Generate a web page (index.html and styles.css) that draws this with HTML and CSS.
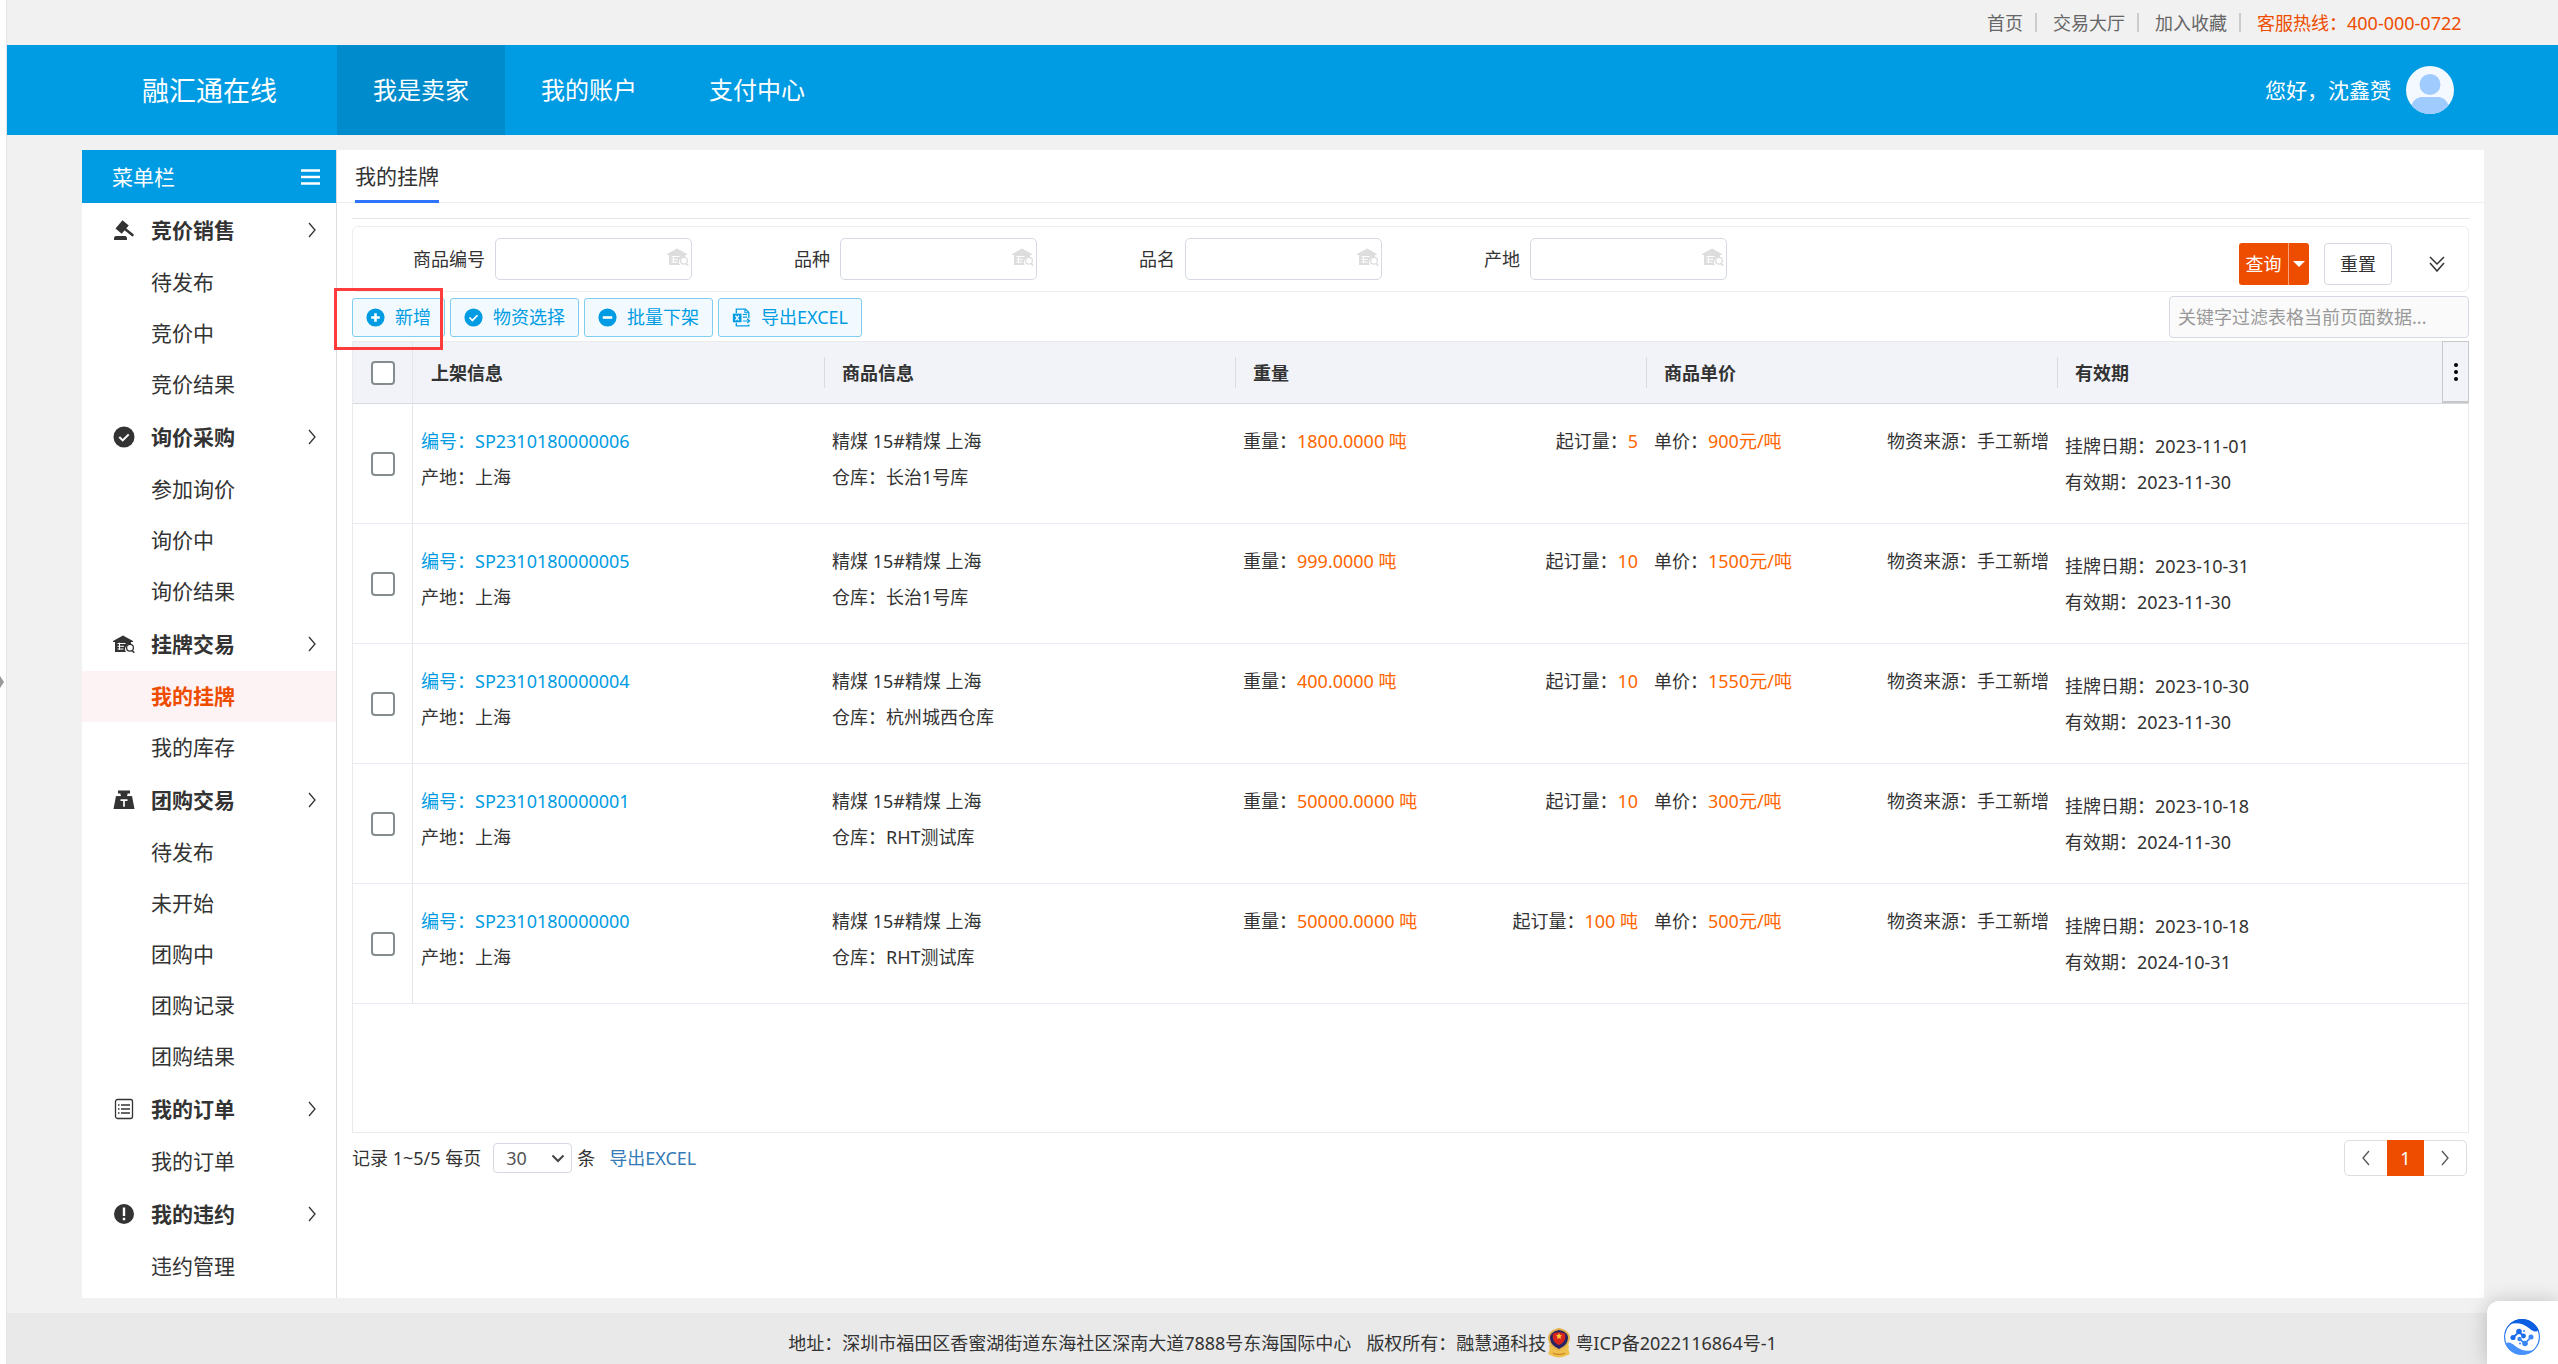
FILE: index.html
```html
<!DOCTYPE html>
<html lang="zh-CN">
<head>
  <meta charset="utf-8">
  <title>我的挂牌 - 融汇通在线</title>
  <link rel="stylesheet" href="styles.css">
</head>
<body>

<svg class="defs" aria-hidden="true">
  <symbol id="i-right" viewBox="0 0 8 16"><path d="M1 1l6 7-6 7" fill="none" stroke="currentColor" stroke-width="1.3"/></symbol>
  <symbol id="i-left" viewBox="0 0 8 16"><path d="M7 1L1 8l6 7" fill="none" stroke="currentColor" stroke-width="1.3"/></symbol>
  <symbol id="i-bars" viewBox="0 0 19 16"><path d="M0 1.5h19M0 8h19M0 14.5h19" stroke="currentColor" stroke-width="2.4"/></symbol>
  <symbol id="i-gavel" viewBox="0 0 22 22">
    <path d="M1 19.5c0-1.500.8-2.500 2-2.500h9c1.200 0 2 1 2 2.500v1.500H1z" fill="currentColor"/>
    <path d="M2.500 9.500L9.500 1.300l6.200 5.200-7 8.200z" fill="currentColor"/>
    <path d="M12 10l7.500 6" stroke="currentColor" stroke-width="2.600" stroke-linecap="round"/>
  </symbol>
  <symbol id="i-check" viewBox="0 0 22 22"><circle cx="11" cy="11" r="10.500" fill="currentColor"/><path d="M6.300 11l3.400 3.400 6-6" fill="none" stroke="#fff" stroke-width="2"/></symbol>
  <symbol id="i-plus" viewBox="0 0 22 22"><circle cx="11" cy="11" r="10.500" fill="currentColor"/><path d="M11 6v10M6 11h10" stroke="#fff" stroke-width="3"/></symbol>
  <symbol id="i-minus" viewBox="0 0 22 22"><circle cx="11" cy="11" r="10.500" fill="currentColor"/><path d="M5.500 11h11" stroke="#fff" stroke-width="3"/></symbol>
  <symbol id="i-warn" viewBox="0 0 22 22"><circle cx="11" cy="11" r="10" fill="currentColor"/><path d="M11 4.500v8.500M11 14.800v2.400" stroke="#fff" stroke-width="2.400"/></symbol>
  <symbol id="i-house" viewBox="0 0 22 22">
    <path d="M0 8l10-5.500L20 8v1h-2v2.200a5 5 0 0 0-5 7.800H2V9H0z" fill="currentColor"/>
    <path d="M4.500 10.500h8M4.500 13.300h6.500M4.500 16h6M6.500 9.800v7" stroke="#fff" stroke-width="1"/>
    <circle cx="17" cy="14.800" r="3.400" fill="none" stroke="currentColor" stroke-width="1.300"/>
    <path d="M19 17.500l2.300 2.300" stroke="currentColor" stroke-width="1.600"/>
  </symbol>
  <symbol id="i-weight" viewBox="0 0 22 22">
    <path d="M5 1.500h12v3h-2.500V7H19l2.500 13H.5L3 7h4.500V4.500H5z" fill="currentColor"/>
    <path d="M3 6.600h5M14 6.600h5" stroke="#fff" stroke-width=".8"/>
    <path d="M7.500 11.200h7M11 11.200v6.600" stroke="#fff" stroke-width="1.700"/>
  </symbol>
  <symbol id="i-order" viewBox="0 0 22 22">
    <rect x="2.500" y="1.500" width="17" height="19" rx="2" fill="none" stroke="currentColor" stroke-width="1.300"/>
    <path d="M5 7h1.500M8 7h9M5 11h1.500M8 11h9M5 15h1.500M8 15h9" stroke="currentColor" stroke-width="1.300"/>
  </symbol>
  <symbol id="i-excel" viewBox="0 0 22 22">
    <path d="M5 6V1.200h10.500l4 4V12M5 17v3.800h14.500V19" fill="none" stroke="currentColor" stroke-width="1.500"/>
    <path d="M15 1.500v4h4M12.500 7.500h5M12.500 10.500h5M12.500 15h7.500M17.500 12.500l3 2.500-3 2.500" fill="none" stroke="currentColor" stroke-width="1.300"/>
    <rect x="1" y="6.500" width="10" height="10" fill="currentColor"/>
    <path d="M4 8.800l4 5.400M8 8.800l-4 5.400" stroke="#fff" stroke-width="1.500"/>
  </symbol>
</svg>

<div class="drawer"><span></span></div>

<div class="page">
  <div class="topbar">
    <a href="#">首页</a><i></i>
    <a href="#">交易大厅</a><i></i>
    <a href="#">加入收藏</a><i></i>
    <span class="hotline">客服热线：400-000-0722</span>
  </div>

  <header class="header">
    <div class="logo">融汇通在线</div>
    <nav class="nav">
      <a class="active" href="#">我是卖家</a>
      <a href="#">我的账户</a>
      <a href="#">支付中心</a>
    </nav>
    <div class="user">
      <span>您好，沈鑫赟</span>
      <svg class="avatar" viewBox="0 0 48 48">
        <clipPath id="face"><circle cx="24" cy="24" r="24"/></clipPath>
        <g clip-path="url(#face)">
          <rect width="48" height="48" fill="#f4f9ff"/>
          <circle cx="24" cy="18.500" r="10.500" fill="#9fcbff"/>
          <path d="M5 44c0-8 5-13 11-13h16c6 0 11 5 11 13v4H5z" fill="#9fcbff"/>
        </g>
      </svg>
    </div>
  </header>

  <div class="main">
    <aside class="sidebar">
      <div class="sidebar-title">菜单栏<svg width="19" height="16"><use href="#i-bars"/></svg></div>

      <div class="group"><svg class="icon"><use href="#i-gavel"/></svg>竞价销售<svg class="arrow"><use href="#i-right"/></svg></div>
      <a href="#">待发布</a>
      <a href="#">竞价中</a>
      <a href="#">竞价结果</a>

      <div class="group"><svg class="icon"><use href="#i-check"/></svg>询价采购<svg class="arrow"><use href="#i-right"/></svg></div>
      <a href="#">参加询价</a>
      <a href="#">询价中</a>
      <a href="#">询价结果</a>

      <div class="group"><svg class="icon"><use href="#i-house"/></svg>挂牌交易<svg class="arrow"><use href="#i-right"/></svg></div>
      <a class="active" href="#">我的挂牌</a>
      <a href="#">我的库存</a>

      <div class="group"><svg class="icon"><use href="#i-weight"/></svg>团购交易<svg class="arrow"><use href="#i-right"/></svg></div>
      <a href="#">待发布</a>
      <a href="#">未开始</a>
      <a href="#">团购中</a>
      <a href="#">团购记录</a>
      <a href="#">团购结果</a>

      <div class="group"><svg class="icon"><use href="#i-order"/></svg>我的订单<svg class="arrow"><use href="#i-right"/></svg></div>
      <a href="#">我的订单</a>

      <div class="group"><svg class="icon"><use href="#i-warn"/></svg>我的违约<svg class="arrow"><use href="#i-right"/></svg></div>
      <a href="#">违约管理</a>
    </aside>

    <div class="content">
      <div class="tabs"><a href="#">我的挂牌</a></div>

      <div class="panel">
        <form class="filter">
          <div class="field">
            <label for="code">商品编号</label>
            <div class="lookup"><input id="code" type="text"><svg><use href="#i-house"/></svg></div>
          </div>
          <div class="field">
            <label for="kind">品种</label>
            <div class="lookup"><input id="kind" type="text"><svg><use href="#i-house"/></svg></div>
          </div>
          <div class="field">
            <label for="name">品名</label>
            <div class="lookup"><input id="name" type="text"><svg><use href="#i-house"/></svg></div>
          </div>
          <div class="field">
            <label for="place">产地</label>
            <div class="lookup"><input id="place" type="text"><svg><use href="#i-house"/></svg></div>
          </div>
          <div class="filter-actions">
            <div class="split">
              <button type="button">查询</button>
              <button type="button" class="caret" aria-label="更多查询"></button>
            </div>
            <button type="button" class="reset">重置</button>
            <svg class="expand" viewBox="0 0 16 16"><path d="M1 1l7 7 7-7M1 7l7 8 7-8" fill="none" stroke="#333" stroke-width="1.500"/></svg>
          </div>
        </form>

        <div class="toolbar">
          <span class="marked"><button type="button"><svg><use href="#i-plus"/></svg>新增</button></span>
          <button type="button"><svg><use href="#i-check"/></svg>物资选择</button>
          <button type="button"><svg><use href="#i-minus"/></svg>批量下架</button>
          <button type="button"><svg><use href="#i-excel"/></svg>导出EXCEL</button>
          <input class="search" type="text" aria-label="过滤" placeholder="关键字过滤表格当前页面数据...">
        </div>

        <div class="grid">
          <button type="button" class="grid-menu" aria-label="列设置"><svg viewBox="0 0 4 18"><circle cx="2" cy="2" r="2"/><circle cx="2" cy="9" r="2"/><circle cx="2" cy="16" r="2"/></svg></button>
          <table>
            <thead>
              <tr>
                <th class="pick"><input type="checkbox" aria-label="全选"></th>
                <th>上架信息</th>
                <th>商品信息</th>
                <th>重量</th>
                <th>商品单价</th>
                <th>有效期</th>
              </tr>
            </thead>
            <tbody>
              <tr>
                <td class="pick"><input type="checkbox" aria-label="选择"></td>
                <td><a href="#">编号：SP2310180000006</a><br>产地：上海</td>
                <td>精煤 15#精煤 上海<br>仓库：长治1号库</td>
                <td><div class="pair"><span>重量：<em>1800.0000 吨</em></span><span>起订量：<em>5</em></span></div></td>
                <td><div class="pair"><span>单价：<em>900元/吨</em></span><span>物资来源：手工新增</span></div></td>
                <td class="date">挂牌日期：2023-11-01<br>有效期：2023-11-30</td>
              </tr>
              <tr>
                <td class="pick"><input type="checkbox" aria-label="选择"></td>
                <td><a href="#">编号：SP2310180000005</a><br>产地：上海</td>
                <td>精煤 15#精煤 上海<br>仓库：长治1号库</td>
                <td><div class="pair"><span>重量：<em>999.0000 吨</em></span><span>起订量：<em>10</em></span></div></td>
                <td><div class="pair"><span>单价：<em>1500元/吨</em></span><span>物资来源：手工新增</span></div></td>
                <td class="date">挂牌日期：2023-10-31<br>有效期：2023-11-30</td>
              </tr>
              <tr>
                <td class="pick"><input type="checkbox" aria-label="选择"></td>
                <td><a href="#">编号：SP2310180000004</a><br>产地：上海</td>
                <td>精煤 15#精煤 上海<br>仓库：杭州城西仓库</td>
                <td><div class="pair"><span>重量：<em>400.0000 吨</em></span><span>起订量：<em>10</em></span></div></td>
                <td><div class="pair"><span>单价：<em>1550元/吨</em></span><span>物资来源：手工新增</span></div></td>
                <td class="date">挂牌日期：2023-10-30<br>有效期：2023-11-30</td>
              </tr>
              <tr>
                <td class="pick"><input type="checkbox" aria-label="选择"></td>
                <td><a href="#">编号：SP2310180000001</a><br>产地：上海</td>
                <td>精煤 15#精煤 上海<br>仓库：RHT测试库</td>
                <td><div class="pair"><span>重量：<em>50000.0000 吨</em></span><span>起订量：<em>10</em></span></div></td>
                <td><div class="pair"><span>单价：<em>300元/吨</em></span><span>物资来源：手工新增</span></div></td>
                <td class="date">挂牌日期：2023-10-18<br>有效期：2024-11-30</td>
              </tr>
              <tr>
                <td class="pick"><input type="checkbox" aria-label="选择"></td>
                <td><a href="#">编号：SP2310180000000</a><br>产地：上海</td>
                <td>精煤 15#精煤 上海<br>仓库：RHT测试库</td>
                <td><div class="pair"><span>重量：<em>50000.0000 吨</em></span><span>起订量：<em>100 吨</em></span></div></td>
                <td><div class="pair"><span>单价：<em>500元/吨</em></span><span>物资来源：手工新增</span></div></td>
                <td class="date">挂牌日期：2023-10-18<br>有效期：2024-10-31</td>
              </tr>
            </tbody>
          </table>
        </div>

        <div class="pager">
          <label for="size">记录 1~5/5 每页</label>
          <span class="select">
            <select id="size"><option>10</option><option selected>30</option><option>50</option></select>
            <svg viewBox="0 0 14 9"><path d="M1.500 1.500L7 7l5.500-5.500" fill="none" stroke="#444" stroke-width="2"/></svg>
          </span>
          <span>条</span>
          <a class="export" href="#">导出EXCEL</a>
          <div class="pages">
            <button type="button" aria-label="上一页"><svg><use href="#i-left"/></svg></button>
            <button type="button" class="active">1</button>
            <button type="button" aria-label="下一页"><svg><use href="#i-right"/></svg></button>
          </div>
        </div>
      </div>
    </div>
  </div>

  <footer class="footer">
    <span class="address">地址：深圳市福田区香蜜湖街道东海社区深南大道7888号东海国际中心</span>
    <span>版权所有：融慧通科技</span>
    <svg class="badge" viewBox="0 0 26 30">
      <path d="M3 17c1 6 0 7-1 9 3 1 5 3 11 3.500C19 29 21 27 24 26c-1-2-2-3-1-9z" fill="#f0c04f"/>
      <path d="M13 0c6 1 10 4 11 9 0 7-4 11-11 14C6 20 2 16 2 9 3 4 7 1 13 0z" fill="#e2b24a"/>
      <path d="M13 2c5 1 8 3 9 7 0 6-3 9-9 12C7 18 4 15 4 9c1-4 4-6 9-7z" fill="#2a2465"/>
      <path d="M7 6c2-2 10-2 12 0 1 5-1 9-6 11C8 15 6 11 7 6z" fill="#d9261c"/>
      <path d="M13 5l1 2 2 .3-1.500 1.500.4 2.200-1.900-1-1.900 1 .4-2.200L10 7.300l2-.3z" fill="#f7c93d"/>
      <path d="M7 25c3 2 9 2 12 0" fill="none" stroke="#c98b28" stroke-width="1.500"/>
    </svg>
    <a href="#">粤ICP备2022116864号-1</a>
  </footer>
</div>

<div class="service">
  <svg viewBox="0 0 36 36">
    <defs><linearGradient id="blue" x1="0" y1="0" x2="0" y2="1"><stop offset="0" stop-color="#0758dd"/><stop offset="1" stop-color="#4e9bff"/></linearGradient></defs>
    <circle cx="18" cy="18" r="17.400" fill="none" stroke="url(#blue)" stroke-width="1.200"/>
    <path d="M5 5.500C14-3 29-1 34.500 11c-3 3-6 1-9-1.500C19 4 12 3 5 5.500z" fill="#0d5fe2"/>
    <path d="M31 30.500C22 39 7 37 1.500 25c3-3 6-1 9 1.500C17 32 24 33 31 30.500z" fill="#4691fb"/>
    <g fill="#1d6cea">
      <circle cx="9" cy="18.500" r="2.600"/><circle cx="15" cy="12.500" r="2.800"/><circle cx="19.500" cy="17" r="2.400"/>
    </g>
    <g fill="#3a86f6">
      <circle cx="15.500" cy="20" r="2.200"/><circle cx="21" cy="24.500" r="2.800"/><circle cx="27" cy="18" r="2.500"/>
      <circle cx="20" cy="12" r="1"/><circle cx="16" cy="24.500" r="1"/>
    </g>
    <path d="M9 18.500l6-5.500 4.500 4" fill="none" stroke="#1d6cea" stroke-width="1.800"/>
    <path d="M15.500 20l5.500 4.500 6-6.500" fill="none" stroke="#3a86f6" stroke-width="1.800"/>
  </svg>
</div>

</body>
</html>
```

FILE: styles.css
```css
* { box-sizing: border-box; }

body {
  margin: 0;
  display: flex;
  min-height: 100vh;
  background: #f1f1f1;
  color: #333;
  font: 18px/24px "Noto Sans", "Noto Sans CJK SC", sans-serif;
}

a { color: inherit; text-decoration: none; }
em { font-style: normal; color: #f60; }
button, input, select { font: inherit; color: inherit; }
button { cursor: pointer; }
.defs { position: absolute; width: 0; height: 0; }

/* collapsed drawer on the left */
.drawer { width: 7px; flex: none; background: #fff; border-right: 1px solid #e4e4e4; display: flex; align-items: center; }
.drawer span { border: 6px solid transparent; border-left: 4px solid #999; border-right: 0; }

.page { flex: 1; min-width: 0; display: flex; flex-direction: column; }

.topbar { display: flex; align-items: center; justify-content: flex-end; height: 45px; padding-right: 89px; color: #666; }
.topbar i { width: 2px; height: 19px; margin: 0 16px 0 12px; background: #ccc; }
.topbar .hotline { min-width: 212px; color: #ee4d00; }

.header { display: flex; height: 90px; background: #009ce3; color: #fff; }
.logo { width: 330px; padding-left: 135px; font-size: 27px; line-height: 92px; }
.nav { display: flex; }
.nav a { width: 168px; text-align: center; font-size: 24px; line-height: 90px; }
.nav a.active { background: #008ccc; }
.user { display: flex; align-items: center; gap: 15px; margin-left: auto; padding-right: 104px; font-size: 21px; }
.avatar { width: 48px; height: 48px; }

.main { display: flex; flex: 1; margin: 15px 74px 15px 75px; background: #fff; }

.sidebar { width: 255px; flex: none; padding-bottom: 6px; border-right: 1px solid #ddd; font-size: 21px; }
.sidebar-title { display: flex; align-items: center; justify-content: space-between; height: 53px; padding: 0 16px 0 30px; background: #009ce3; color: #fff; }
.group { display: flex; align-items: center; height: 54px; padding: 0 20px 0 31px; font-weight: bold; }
.group .icon { width: 22px; height: 22px; margin-right: 16px; }
.group .arrow { width: 8px; height: 16px; margin-left: auto; }
.sidebar a { display: block; padding-left: 69px; line-height: 51px; }
.sidebar a.active { background: #fdf2f4; color: #ee4d00; font-weight: bold; }

.content { flex: 1; min-width: 0; }
.tabs { height: 53px; padding-left: 18px; border-bottom: 1px solid #eee; font-size: 21px; }
.tabs a { display: inline-block; height: 53px; line-height: 52px; border-bottom: 3px solid #2f74ff; }
.panel { margin: 15px 15px 0; border-top: 1px solid #e4e4e4; }

.filter { display: flex; gap: 6px; height: 66px; margin-top: 7px; padding-top: 11px; border: 1px solid #eee; border-radius: 6px; }
.field { display: flex; align-items: center; gap: 10px; height: 42px; }
.field label { width: 132px; text-align: right; }
.lookup { position: relative; }
.lookup input { display: block; width: 197px; height: 42px; padding: 0 30px 0 10px; border: 1px solid #d5d9e2; border-radius: 5px; background: #fff; }
.lookup svg { position: absolute; right: 3px; top: 8px; width: 22px; height: 22px; color: #ddd; }
.filter-actions { display: flex; align-items: center; height: 42px; margin: 5px 23px 0 auto; }
.split { display: flex; }
.split button { height: 42px; width: 50px; padding: 0; border: 0; border-right: 1px solid #f6a27b; border-radius: 3px 0 0 3px; background: #ee4d00; color: #fff; }
.split .caret { display: flex; align-items: center; justify-content: center; width: 20px; border: 0; border-radius: 0 3px 3px 0; }
.caret::before { content: ""; border: 6px solid transparent; border-top-color: #fff; border-bottom: 0; }
.reset { width: 68px; height: 42px; margin: 0 37px 0 15px; padding: 0; border: 1px solid #d5d9e2; border-radius: 4px; background: #fff; }
.expand { width: 16px; height: 16px; }

.toolbar { display: flex; align-items: center; gap: 5px; height: 42px; margin: 4px 0 3px; }
.toolbar button { display: flex; align-items: center; height: 39px; padding: 0 13px; border: 1px solid #7fcdef; border-radius: 3px; background: #f2faff; color: #009ce3; }
.toolbar svg { width: 19px; height: 19px; margin-right: 10px; }
/* highlight of the step being described */
.marked { position: relative; }
.marked::after { content: ""; position: absolute; left: -18px; right: 2px; top: -10px; bottom: -13px; border: 3px solid #ff3b3b; pointer-events: none; z-index: 1; }
.search { width: 300px; height: 42px; margin-left: auto; padding: 0 8px; border: 1px solid #d5d9e2; border-radius: 4px; background: #fafafa; }
.search::placeholder { color: #999; }

.grid { position: relative; min-height: 792px; border: 1px solid #eaeaea; }
.grid table { width: 100%; table-layout: fixed; border-spacing: 0; }
.grid th { position: relative; height: 62px; padding: 0 18px; background: #f2f3f9; border-bottom: 1px solid #d5d9e0; text-align: left; }
.grid th + th + th::before { content: ""; position: absolute; left: 0; top: 15px; bottom: 15px; width: 1px; background: #d9dbe2; }
.grid td { height: 120px; padding: 0 8px 10px; border-bottom: 1px solid #e8ebf3; line-height: 36px; }
.grid td a { color: #009ce3; }
.grid td:nth-child(4), .grid td:nth-child(5) { padding-top: 19px; vertical-align: top; }
.grid .date { padding-bottom: 0; }
.grid .pick { width: 60px; padding: 0; border-right: 1px solid #e4e6ec; text-align: center; }
.pick input { appearance: none; display: block; width: 24px; height: 24px; margin: 0 auto; border: 2px solid #858c90; border-radius: 4px; background: #fff; }
.pair { display: flex; justify-content: space-between; }
.grid-menu { position: absolute; right: -1px; top: -1px; z-index: 1; display: flex; align-items: center; justify-content: center; width: 27px; height: 62px; padding: 0; border: 1px solid #c8c8c8; border-bottom-width: 2px; background: #f2f3f9; }
.grid-menu svg { width: 4px; height: 18px; }

.pager { display: flex; align-items: center; height: 50px; }
.select { position: relative; margin: 0 5px 0 12px; }
.select select { appearance: none; display: block; width: 79px; height: 30px; padding: 0 12px; border: 1px solid #d5d9e2; border-radius: 4px; background: #fff; color: #555; }
.select svg { position: absolute; right: 7px; top: 11px; width: 14px; height: 9px; pointer-events: none; }
.export { margin-left: 14px; color: #337ab7; }
.pages { display: flex; height: 36px; margin-left: auto; margin-right: 2px; border: 1px solid #ddd; border-radius: 5px; }
.pages button { display: flex; align-items: center; justify-content: center; width: 42px; padding: 0; border: 0; background: none; color: #555; }
.pages svg { width: 8px; height: 16px; }
.pages .active { width: 37px; margin: -1px 0; background: #ee4d00; color: #fff; }

.footer { display: flex; align-items: center; justify-content: center; height: 51px; padding-top: 9px; background: #e9e9e9; }
.address { margin-right: 15px; }
.badge { width: 26px; height: 30px; margin-right: 3px; }

.service { position: fixed; right: 0; bottom: 0; width: 71px; height: 63px; padding: 18px 0 0 17px; border-top-left-radius: 12px; background: #fff; box-shadow: 0 0 20px rgba(0, 0, 0, .2); }
.service svg { display: block; width: 36px; height: 36px; }
```
